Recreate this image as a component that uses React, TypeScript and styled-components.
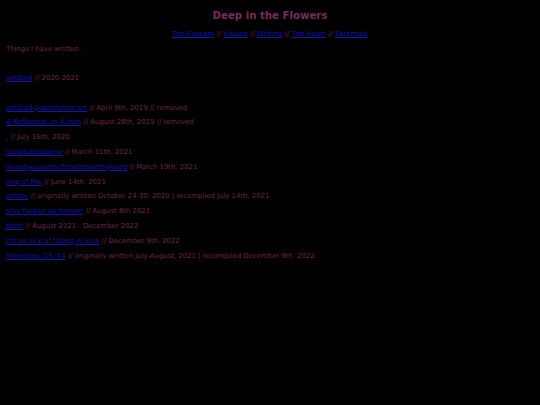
import React from "react";
import styled, { createGlobalStyle } from "styled-components";

const GlobalStyle = createGlobalStyle`
  html, body {
    margin: 0;
    padding: 0;
    background: #000;
  }
  body {
    font-family: "DejaVu Sans", "Liberation Sans", sans-serif;
  }
`;

const Page = styled.div`
  min-height: 405px;
  background: #000;
  padding: 0 6px;
  box-sizing: border-box;
  color: #6e2550;
  font-size: 6.9px;
`;

const Title = styled.h1`
  margin: 9px 0 0;
  text-align: center;
  font-size: 10.2px;
  line-height: 13px;
  font-weight: bold;
  color: #7b2a5c;
`;

const Nav = styled.nav`
  margin-top: 5px;
  text-align: center;
  line-height: 15px;
  font-size: 7px;
`;

const Link = styled.a`
  color: #1212b8;
  text-decoration: underline;
`;

const Line = styled.p<{ $gap?: number }>`
  margin: ${(p) => p.$gap ?? 0}px 0 0;
  line-height: 14.8px;
  white-space: nowrap;
`;

const navItems = ["The Flowers", "Visuals", "Writing", "The Heart", "Externals"];

const entries: [string, string][] = [
  ["untitled poem/letter art", "April 9th, 2019 // removed"],
  ["A Reflection on 4chan", "August 28th, 2019 // removed"],
  [":", "July 16th, 2020"],
  ["isluginardisgone", "March 11th, 2021"],
  ["ilovedyousomuchthatitburtmyhead", "March 19th, 2021"],
  ["ring of fire", "June 14th, 2021"],
  ["ashley", "originally written October 24-30, 2020 | recompiled July 14th, 2021"],
  ["stay fucked up forever", "August 8th 2021"],
  ["bitch", "August 2021 - December 2022"],
  ["I'm so sick of falling in love", "December 9th, 2022"],
  ["Memories '13-'14", "originally written July-August, 2021 | recompiled December 9th, 2022."],
];

export default function App() {
  return (
    <>
      <GlobalStyle />
      <Page>
        <Title>Deep in the Flowers</Title>
        <Nav>
          {navItems.map((item, i) => (
            <React.Fragment key={item}>
              {i > 0 && " // "}
              <Link href="#">{item}</Link>
            </React.Fragment>
          ))}
        </Nav>
        <Line>Things I have written.</Line>
        <Line $gap={14}>
          <Link href="#">untitled</Link> // 2020-2021
        </Line>
        {entries.map(([name, info], i) => (
          <Line key={name} $gap={i === 0 ? 15 : 0}>
            <Link href="#">{name}</Link> // {info}
          </Line>
        ))}
      </Page>
    </>
  );
}
